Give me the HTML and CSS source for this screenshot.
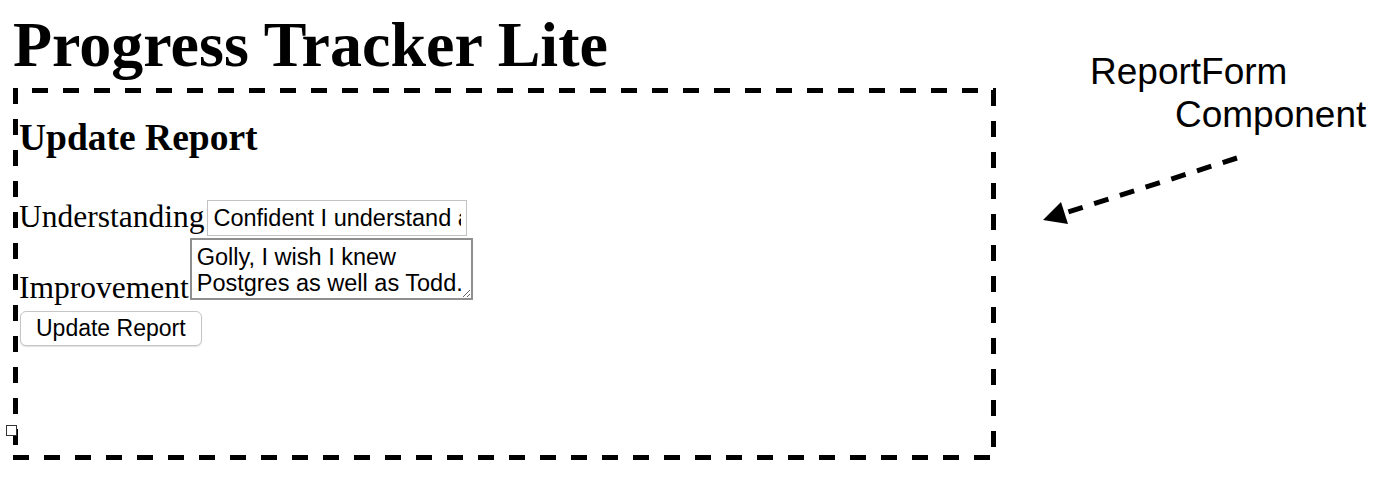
FILE: index.html
```html
<!DOCTYPE html>
<html lang="en">
<head>
<meta charset="utf-8">
<title>Progress Tracker Lite</title>
<link rel="stylesheet" href="styles.css">
</head>
<body>
<div class="page">
  <div class="main">
    <h1 class="title">Progress Tracker Lite</h1>
    <form class="report-form">
      <h3 class="form-title">Update Report</h3>
      <div class="row row-understanding">
        <label class="field-label" for="understanding">Understanding</label>
        <input id="understanding" class="text-input" type="text" value="Confident I understand all of it">
      </div>
      <div class="row row-improvement">
        <label class="field-label label-improvement" for="improvement">Improvement</label>
        <textarea id="improvement" class="text-area">Golly, I wish I knew Postgres as well as Todd.</textarea>
      </div>
      <button type="button" class="submit-btn">Update Report</button>
      <span class="stray-box"></span>
    </form>
  </div>
  <aside class="note">
    <div class="note-line1">ReportForm</div>
    <div class="note-line2">Component</div>
    <svg class="note-arrow" width="210" height="100" viewBox="0 0 210 100">
      <line x1="197" y1="22" x2="25" y2="77" stroke="#000" stroke-width="5" stroke-dasharray="15 12"/>
      <polygon points="3,84 21,66 28,88" fill="#000"/>
    </svg>
  </aside>
</div>
</body>
</html>
```

FILE: styles.css
```css
body {
  margin: 0;
  background: #fff;
  color: #000;
  font-family: "Liberation Serif", "Times New Roman", serif;
}

.page {
  display: flex;
  align-items: flex-start;
}

.main {
  flex: none;
  padding-left: 13px;
}

.title {
  margin: 0;
  padding-top: 10px;
  font-size: 64px;
  line-height: 70px;
  font-weight: bold;
}

.report-form {
  position: relative;
  box-sizing: border-box;
  width: 983px;
  height: 372px;
  margin-top: 8px;
  padding: 24px 0 0 1px;
  border: 5px solid transparent;
  background-origin: border-box;
  background-clip: border-box;
  background-image:
    linear-gradient(to right, #000 16px, transparent 16px),
    linear-gradient(to right, #000 16px, transparent 16px),
    linear-gradient(to bottom, #000 16px, transparent 16px),
    linear-gradient(to bottom, #000 16px, transparent 16px);
  background-size: 31px 5px, 31px 5px, 5px 31px, 5px 31px;
  background-position: 19px 0, 0 100%, 0 0, 100% 2px;
  background-repeat: repeat-x, repeat-x, repeat-y, repeat-y;
}

.form-title {
  margin: 0;
  font-size: 37.5px;
  line-height: 42px;
  font-weight: bold;
}

.row {
  display: flex;
  align-items: flex-start;
}

.row-understanding {
  margin-top: 41px;
}

.row-improvement {
  margin-top: 2px;
}

.field-label {
  font-size: 31.5px;
  line-height: 33px;
}

.label-improvement {
  margin-top: 33px;
}

.text-input {
  box-sizing: border-box;
  width: 260px;
  height: 36px;
  margin: 0 0 0 3px;
  padding: 0 5px;
  border: 1px solid #c2c2c2;
  border-radius: 0;
  background: #fff;
  color: #000;
  font: 23.5px "Liberation Sans", Arial, sans-serif;
  outline: none;
}

.text-area {
  box-sizing: border-box;
  width: 283px;
  height: 62px;
  margin: 0 0 0 1px;
  padding: 4px 5px 0;
  border: 2px solid #8f8f8f;
  border-radius: 0;
  background: #fff;
  color: #000;
  font: 23.5px/26px "Liberation Sans", Arial, sans-serif;
  resize: both;
  overflow: hidden;
  outline: none;
}

.submit-btn {
  display: block;
  box-sizing: border-box;
  height: 35px;
  margin: 7px 0 0 1px;
  padding: 0 15px;
  border: 1px solid #c6c6c6;
  border-radius: 6px;
  background: #fff;
  box-shadow: 0 1px 1px rgba(0, 0, 0, 0.12);
  color: #000;
  font: 23px "Liberation Sans", Arial, sans-serif;
}

.stray-box {
  position: absolute;
  left: -12px;
  top: 332px;
  box-sizing: border-box;
  width: 11px;
  height: 11px;
  border: 1px solid #333;
  background: #fff;
}

.note {
  flex: none;
  padding-top: 50px;
  font-family: "Liberation Sans", Arial, sans-serif;
  font-size: 37px;
  line-height: 43px;
}

.note-line1 {
  margin-left: 94px;
}

.note-line2 {
  margin-left: 179px;
}

.note-arrow {
  display: block;
  margin-left: 44px;
}
```
